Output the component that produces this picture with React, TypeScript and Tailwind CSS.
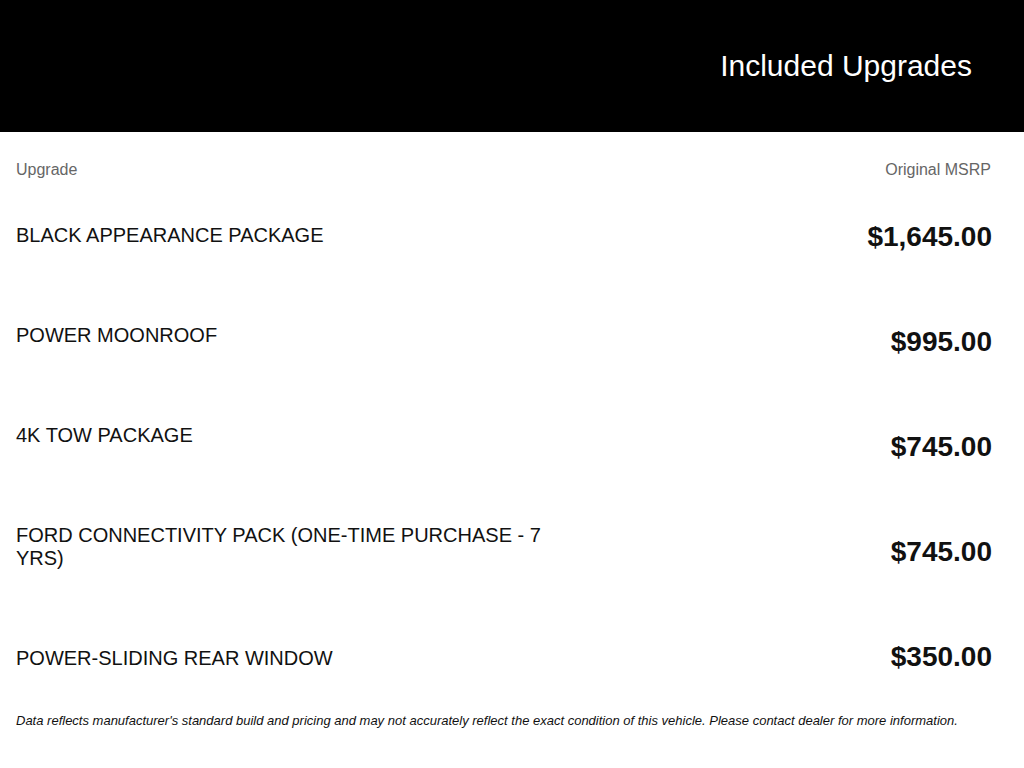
import React from "react";

const names = [
  "BLACK APPEARANCE PACKAGE",
  "POWER MOONROOF",
  "4K TOW PACKAGE",
  "FORD CONNECTIVITY PACK (ONE-TIME PURCHASE - 7 YRS)",
  "POWER-SLIDING REAR WINDOW",
];
const prices = ["$1,645.00", "$995.00", "$745.00", "$745.00", "$350.00"];

export default function App() {
  return (
    <div className="w-[1024px] min-h-[768px] bg-white" style={{ fontFamily: '"Liberation Sans", Arial, sans-serif' }}>
      <div className="h-[132px] bg-black flex items-center justify-end pr-[52px]">
        <h1 className="text-[30px] text-white leading-none">Included Upgrades</h1>
      </div>
      <div className="px-4">
        <div className="flex justify-between pt-[29px] pr-[17px] text-[16px] leading-[18px] text-[#666]">
          <span>Upgrade</span>
          <span>Original MSRP</span>
        </div>
        <div className="flex justify-between pt-[45px] pr-[16px]">
          <div className="w-[540px] flex flex-col gap-[77px]">
            {names.map((n) => (
              <div key={n} className="text-[20px] leading-[23px] text-[#111]">{n}</div>
            ))}
          </div>
          <div className="flex flex-col items-end gap-[77px] -mt-px">
            {prices.map((p, i) => (
              <div key={i} className="text-[28px] leading-[28px] font-bold text-[#111]">{p}</div>
            ))}
          </div>
        </div>
        <p className="mt-[42px] text-[13px] leading-[15px] italic text-[#111]">
          Data reflects manufacturer's standard build and pricing and may not accurately reflect the exact condition of this vehicle. Please contact dealer for more information.
        </p>
      </div>
    </div>
  );
}
